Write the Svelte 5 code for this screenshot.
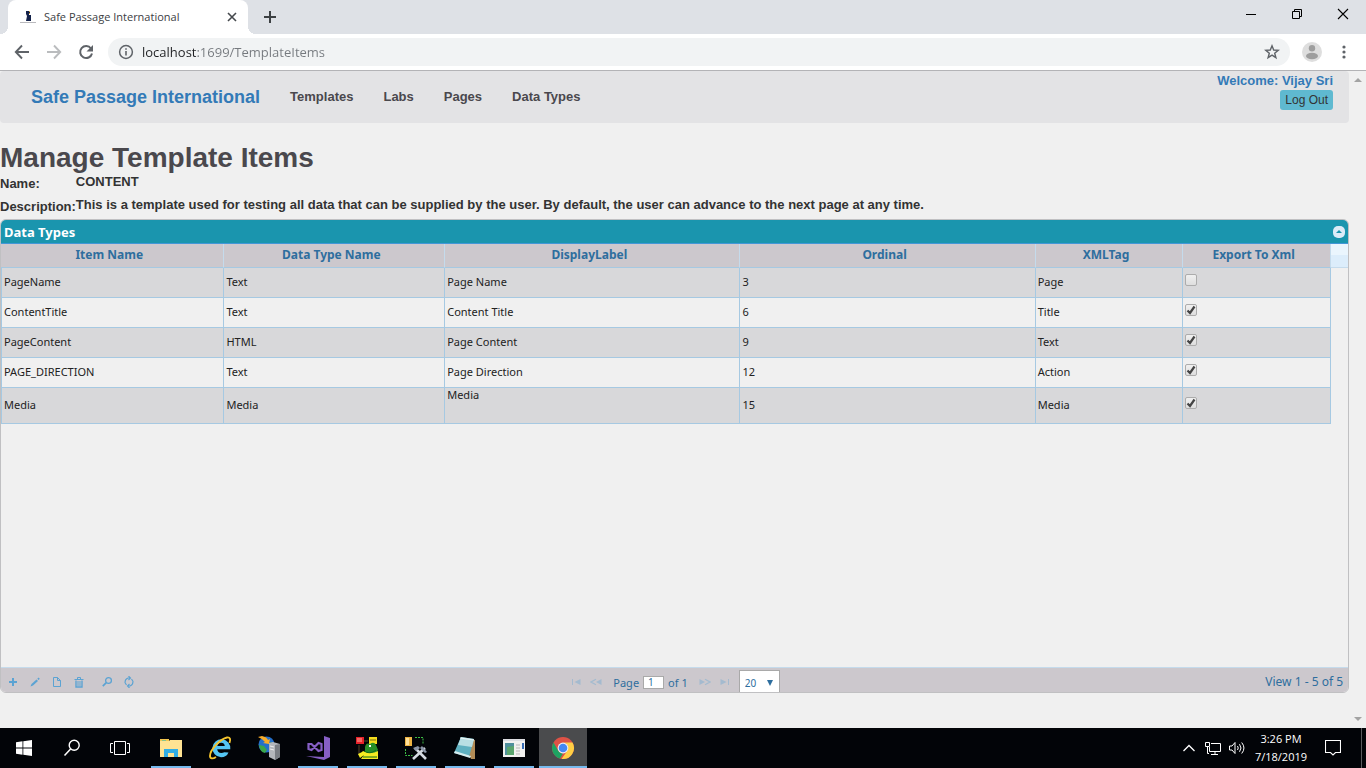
<script>
	let url = 'localhost:1699/TemplateItems';
	let page = '1';
	let pageSize = '20';
	let open = true;
	const links = ['Templates', 'Labs', 'Pages', 'Data Types'];
	const columns = [
		{label: 'Item Name', width: 16.8},
		{label: 'Data Type Name', width: 16.6},
		{label: 'DisplayLabel', width: 22.2},
		{label: 'Ordinal', width: 22.2},
		{label: 'XMLTag', width: 11.1},
		{label: 'Export To Xml', width: 11.1}
	];
	let items = [
		{name: 'PageName', type: 'Text', label: 'Page Name', ordinal: 3, tag: 'Page', xml: false},
		{name: 'ContentTitle', type: 'Text', label: 'Content Title', ordinal: 6, tag: 'Title', xml: true},
		{name: 'PageContent', type: 'HTML', label: 'Page Content', ordinal: 9, tag: 'Text', xml: true},
		{name: 'PAGE_DIRECTION', type: 'Text', label: 'Page Direction', ordinal: 12, tag: 'Action', xml: true},
		{name: 'Media', type: 'Media', label: 'Media', ordinal: 15, tag: 'Media', xml: true, tall: true}
	];
</script>

<div class="screen">
	<header class="tabs">
		<div class="tab">
			<svg width="16" height="16" viewBox="0 0 16 16">
				<path d="M6 2h4v2l-1 1v1h2v6H6l1-5-1-2z" fill="#14224a"/>
				<path d="M9 2h1v1H9zM9 4h1v1H9z" fill="#d9a441"/>
				<path d="M0 13h16v1H0z" fill="#b9b9bd"/>
			</svg>
			<span class="tab-title">Safe Passage International</span>
			<button class="plain" aria-label="Close tab">
				<svg width="16" height="16" viewBox="0 0 16 16"><path d="M4 4l8 8M12 4l-8 8" stroke="#45494d" stroke-width="1.6"/></svg>
			</button>
		</div>
		<button class="plain new-tab" aria-label="New tab">
			<svg width="16" height="16" viewBox="0 0 16 16"><path d="M8 2v12M2 8h12" stroke="#3c4043" stroke-width="2"/></svg>
		</button>
		<div class="window-buttons">
			<button class="plain" aria-label="Minimize">
				<svg width="12" height="12" viewBox="0 0 12 12"><path d="M1 6.5h10" stroke="#000"/></svg>
			</button>
			<button class="plain" aria-label="Restore">
				<svg width="12" height="12" viewBox="0 0 12 12"><path d="M1.5 3.5h7v7h-7zM3.5 3.5v-2h7v7h-2" fill="none" stroke="#000"/></svg>
			</button>
			<button class="plain" aria-label="Close window">
				<svg width="12" height="12" viewBox="0 0 12 12"><path d="M1 1l10 10M11 1L1 11" stroke="#000" stroke-width="1.1"/></svg>
			</button>
		</div>
	</header>

	<div class="toolbar">
		<button class="plain nav-button" aria-label="Back">
			<svg width="16" height="16" viewBox="0 0 16 16"><path d="M15 8H2M8 1.500L1.800 8 8 14.500" fill="none" stroke="#5f6368" stroke-width="1.900"/></svg>
		</button>
		<button class="plain nav-button" aria-label="Forward">
			<svg width="16" height="16" viewBox="0 0 16 16"><path d="M1 8h13M8 1.500L14.200 8 8 14.500" fill="none" stroke="#babcbe" stroke-width="1.900"/></svg>
		</button>
		<button class="plain nav-button" aria-label="Reload">
			<svg width="16" height="16" viewBox="0 0 16 16"><path d="M13 4.500A6 6 0 1 0 14 9.500" fill="none" stroke="#5f6368" stroke-width="2"/><path d="M15 1v6.500H8.500z" fill="#5f6368"/></svg>
		</button>
		<div class="omnibox">
			<svg width="16" height="16" viewBox="0 0 16 16"><circle cx="8" cy="8" r="6.400" fill="none" stroke="#5f6368" stroke-width="1.500"/><path d="M8 7v4.500M8 4.200v1.600" stroke="#5f6368" stroke-width="1.600"/></svg>
			<input class="url" aria-label="Address" bind:value={url}>
			<button class="plain" aria-label="Bookmark this page">
				<svg width="16" height="16" viewBox="0 0 16 16"><path d="M8 1.800l1.700 4.200 4.500.3-3.500 2.900 1.200 4.500L8 11.200l-3.900 2.500 1.200-4.500L1.800 6.300l4.500-.3z" fill="none" stroke="#5f6368" stroke-width="1.400"/></svg>
			</button>
		</div>
		<button class="plain avatar" aria-label="Profile">
			<svg width="20" height="20" viewBox="0 0 20 20"><circle cx="10" cy="10" r="10" fill="#dedede"/><circle cx="10" cy="6.200" r="3.200" fill="#9e9e9e"/><ellipse cx="10" cy="14" rx="6" ry="3.300" fill="#9e9e9e"/></svg>
		</button>
		<button class="plain" aria-label="Menu">
			<svg width="16" height="16" viewBox="0 0 16 16"><g fill="#5f6368"><circle cx="8" cy="3" r="1.600"/><circle cx="8" cy="8" r="1.600"/><circle cx="8" cy="13" r="1.600"/></g></svg>
		</button>
	</div>

	<div class="viewport">
		<main>
			<nav class="site-nav">
				<a class="brand" href="/">Safe Passage International</a>
				{#each links as link}
					<a href="#{link}">{link}</a>
				{/each}
				<div class="account">
					<span class="welcome">Welcome: Vijay Sri</span>
					<button class="logout">Log Out</button>
				</div>
			</nav>

			<h1>Manage Template Items</h1>
			<dl>
				<dt>Name:</dt>
				<dd>CONTENT</dd>
				<dt>Description:</dt>
				<dd>This is a template used for testing all data that can be supplied by the user. By default, the user can advance to the next page at any time.</dd>
			</dl>

			<section class="grid">
				<div class="grid-title">
					<h2>Data Types</h2>
					<button class="plain" aria-label="Collapse grid" on:click={() => (open = !open)}>
						<svg width="12" height="12" viewBox="0 0 12 12"><rect width="12" height="12" rx="5" fill="#dcebf7"/><path d="M6 4l3 3H3z" fill="#1a95ae"/></svg>
					</button>
				</div>
				<div class="grid-body">
					{#if open}
						<table>
							<thead>
								<tr>
									{#each columns as col}
										<th style="width: {col.width}%">{col.label}</th>
									{/each}
									<td class="gutter"></td>
								</tr>
							</thead>
							<tbody>
								{#each items as item}
									<tr class:tall={item.tall}>
										<td>{item.name}</td>
										<td>{item.type}</td>
										<td class="label">{item.label}</td>
										<td>{item.ordinal}</td>
										<td>{item.tag}</td>
										<td><input type="checkbox" aria-label="Export {item.name} to XML" bind:checked={item.xml}></td>
									</tr>
								{/each}
							</tbody>
						</table>
					{/if}
				</div>
				<div class="pager">
					<div class="actions">
						<button class="plain" aria-label="Add row">
							<svg width="10" height="12" viewBox="0 0 10 12"><path d="M5 2v8M1 6h8" stroke="#5ba3d3" stroke-width="2"/></svg>
						</button>
						<button class="plain" aria-label="Edit row">
							<svg width="10" height="12" viewBox="0 0 10 12"><path d="M.5 10.500l1-2.500L6.500 3.500l1.500 1.500L3 9.500z" fill="#5ba3d3"/><path d="M7.300 2.700l1.200-1.200 1.300 1.300-1.200 1.200z" fill="#5ba3d3"/></svg>
						</button>
						<button class="plain" aria-label="View row">
							<svg width="10" height="12" viewBox="0 0 10 12"><path d="M1.500 1.500h4l3 3v6h-7zM5.500 1.500v3h3" fill="none" stroke="#5ba3d3"/></svg>
						</button>
						<button class="plain" aria-label="Delete row">
							<svg width="10" height="12" viewBox="0 0 10 12"><path d="M.5 3.500h9M3.500 3V1.500h3V3" fill="none" stroke="#5ba3d3"/><path d="M2 4.500v6.500h6V4.500" fill="none" stroke="#5ba3d3" stroke-width="1.400"/><path d="M4 5v5M6 5v5" stroke="#5ba3d3"/></svg>
						</button>
						<button class="plain find" aria-label="Find records">
							<svg width="10" height="12" viewBox="0 0 10 12"><circle cx="6.500" cy="4.500" r="2.900" fill="none" stroke="#5ba3d3" stroke-width="1.300"/><path d="M4.300 6.700L.8 10.200" stroke="#5ba3d3" stroke-width="1.700"/></svg>
						</button>
						<button class="plain" aria-label="Reload grid">
							<svg width="10" height="12" viewBox="0 0 10 12"><path d="M5.500 2H4Q1 3 1 6.500L2.500 9M4.500 10H6Q9 9 9 5.500L7.500 3M4.500 0l2 2-2 2M5.500 8l-2 2 2 2" fill="none" stroke="#5ba3d3" stroke-width="1.100"/></svg>
						</button>
					</div>
					<div class="paging">
						<button class="plain faded" aria-label="First page">
							<svg width="10" height="8" viewBox="0 0 10 8"><path d="M1 1h1v6H1zM9.500 1v6L3.500 4z" fill="#5ba3d3"/></svg>
						</button>
						<button class="plain faded" aria-label="Previous page">
							<svg width="12" height="8" viewBox="0 0 12 8"><path d="M11.500 1v6L6 4z" fill="#5ba3d3"/><path d="M6 1.300L1 4l5 2.700" fill="none" stroke="#5ba3d3" stroke-width="1.300"/></svg>
						</button>
						<label>Page <input class="page-number" bind:value={page}> of 1</label>
						<button class="plain faded" aria-label="Next page">
							<svg width="12" height="8" viewBox="0 0 12 8"><path d="M.5 1v6L6 4z" fill="#5ba3d3"/><path d="M6 1.300L11 4 6 6.700" fill="none" stroke="#5ba3d3" stroke-width="1.300"/></svg>
						</button>
						<button class="plain faded" aria-label="Last page">
							<svg width="10" height="8" viewBox="0 0 10 8"><path d="M8 1h1v6H8zM.5 1v6L6.500 4z" fill="#5ba3d3"/></svg>
						</button>
						<select aria-label="Records per page" bind:value={pageSize}>
							<option>20</option>
							<option>50</option>
						</select>
					</div>
					<div class="records">View 1 - 5 of 5</div>
				</div>
			</section>
		</main>
		<div class="scrollbar">
			<svg width="8" height="4" viewBox="0 0 8 4"><path d="M4 0l4 4H0z" fill="#a3a3a3"/></svg>
			<svg width="8" height="4" viewBox="0 0 8 4"><path d="M4 4L0 0h8z" fill="#a3a3a3"/></svg>
		</div>
	</div>

	<footer class="taskbar">
		<button class="plain" aria-label="Start">
			<svg width="16" height="16" viewBox="0 0 16 16"><path d="M0 2.200L6.500 1.300v6.300H0zM7.300 1.200L16 0v7.600H7.300zM0 8.400h6.500v6.300L0 13.800zM7.300 8.400H16V16l-8.700-1.200z" fill="#fff"/></svg>
		</button>
		<button class="plain" aria-label="Search">
			<svg width="18" height="18" viewBox="0 0 18 18"><circle cx="11.200" cy="6.300" r="5" fill="none" stroke="#fff" stroke-width="1.400"/><path d="M7.600 10L1.500 16.500" stroke="#fff" stroke-width="1.500"/></svg>
		</button>
		<button class="plain" aria-label="Task view">
			<svg width="20" height="16" viewBox="0 0 20 16"><path d="M4.500 1.500h11v13h-11zM3 3.500H.5v9H3M17 3.500h2.500v9H17" fill="none" stroke="#fff"/></svg>
		</button>
		<div class="apps">
			<button class="plain running" aria-label="File Explorer">
				<svg width="24" height="24" viewBox="0 0 24 24"><path d="M1 3h9v3H1z" fill="#f3c64f"/><path d="M1 5h9l1-1h12v17H1z" fill="#ffe393"/><path d="M3 4h4v1H3z" fill="#8bc58b"/><path d="M5 13h14v8h-4v-4H9v4H5z" fill="#32aee5"/></svg>
			</button>
			<button class="plain" aria-label="Internet Explorer">
				<svg width="24" height="24" viewBox="0 0 24 24"><path d="M20.500 16.500a8 7.500 0 0 1-7.500 4.800 9 9 0 1 1 9.300-8H9.200q.5 3.500 4 3.700 2 0 3-.8zM9.300 10h7.500Q16.300 6.800 13.200 6.800T9.300 10z" fill="#54c5f3"/><path d="M21.500 7c1.500-4 .5-6-2.500-5.500C12.500 3 2 13.500 2 20c0 3 3 3 6 1" fill="none" stroke="#f5c42c" stroke-width="1.900"/></svg>
			</button>
			<button class="plain" aria-label="IIS Manager">
				<svg width="24" height="24" viewBox="0 0 24 24"><circle cx="9.500" cy="8.500" r="8" fill="#2470cc"/><path d="M2 9l5 1 3 4-2 3q-5-1-6-8zM12 8l2-2 2 2-1 4-3-1z" fill="#3aa64a"/><path d="M1 1l4-1q5 1 6 4l2-1-1 5-6-1 2-1q-2-3-7-5z" fill="#f9ad29"/><path d="M12 7l4-1 7 2v13l-5 3-6-3z" fill="#b4b7bc"/><path d="M18 9l5-1v13l-5 3z" fill="#7a7e84"/><path d="M13 10l4 1M13 13l4 1" stroke="#eee"/></svg>
			</button>
			<button class="plain running" aria-label="Visual Studio">
				<svg width="24" height="24" viewBox="0 0 24 24"><path d="M18 0l6 2v19l-6 3L0 20l18 1z" fill="#865fc5"/><path d="M2.500 8v5l3 1 7-7 3 1v6l-3 1-7-7z" fill="none" stroke="#865fc5" stroke-width="2.200"/></svg>
			</button>
			<button class="plain running" aria-label="Toad">
				<svg width="24" height="24" viewBox="0 0 24 24"><path d="M1 1h8v7H1z" fill="#e62129"/><path d="M2 3h5M2 5h5" stroke="#ffb0a0"/><path d="M14 1h8v7h-8z" fill="#f4dc1d"/><path d="M15 4h6" stroke="#776c11"/><path d="M4 9v10M9 5h4" stroke="#56472a"/><path d="M10 11q1-5 5-3 4-3 6 1l2 5-2 3H10z" fill="#268e27"/><path d="M8 15q8 4 15 0v8H6l3-4-4 3-2-4 4-2z" fill="#f5ec22"/><path d="M9 15q6 4 12-1M8 21h14" fill="none" stroke="#136b19"/><path d="M14 9h2v2h-2z" fill="#fff"/></svg>
			</button>
			<button class="plain running" aria-label="Database tools">
				<svg width="24" height="24" viewBox="0 0 24 24"><path d="M1 1h7v9H1z" fill="#edb343"/><path d="M2 2h3v7H2z" fill="#ffe19b"/><path d="M11 1.500h8v7M1.500 13v6.500h7" fill="none" stroke="#3cbd45" stroke-dasharray="2 1"/><path d="M11 12l11 11M21 12L9 23" stroke="#d5dae2" stroke-width="2.600"/><path d="M9 12l5-2 2 2-4 3zM18 10l5 6-2 1-5-5z" fill="#8b96a8"/></svg>
			</button>
			<button class="plain running" aria-label="Notepad">
				<svg width="24" height="24" viewBox="0 0 24 24"><path d="M9 2l13 2 0 19-4 0z" fill="#b28b56"/><path d="M8 1l13 2-5 18L1 17z" fill="#5fb0c0"/><path d="M8 1l13 2-2 8L5 9z" fill="#b9dfe4"/><path d="M7 2l14 2" stroke="#e9f5f5"/><path d="M1 17l16 5 1-2L2 15z" fill="#d6ecee"/></svg>
			</button>
			<button class="plain running" aria-label="Application window">
				<svg width="24" height="24" viewBox="0 0 24 24"><path d="M1 3h22v18H1z" fill="#f1f1ef"/><path d="M1 3h22v2H1z" fill="#dcdde2"/><path d="M3 7h9v12H3z" fill="#4f8f9c"/><path d="M5 11l7-1v9H5z" fill="#5aa46d"/><path d="M14 9h4M14 12h4M14 15h4M14 18h4" stroke="#b7b7b7"/><path d="M20 7h2v6h-2z" fill="#356bb4"/></svg>
			</button>
			<button class="plain running active" aria-label="Google Chrome">
				<svg width="24" height="24" viewBox="0 0 24 24"><circle cx="12" cy="12" r="11" fill="#de5246"/><path d="M2.500 6.500L7.200 14.700A5.500 5.500 0 0 0 12 17.500L9 22.600A11 11 0 0 1 2.500 6.500z" fill="#1da362"/><path d="M12 6.500h9.500A11 11 0 0 1 10.500 22.900L16.500 14.500A5.500 5.500 0 0 0 12 6.500z" fill="#ffce44"/><circle cx="12" cy="12" r="5.400" fill="#f1f1f1"/><circle cx="12" cy="12" r="4.300" fill="#4587f3"/></svg>
			</button>
		</div>
		<div class="tray">
			<svg width="16" height="16" viewBox="0 0 16 16"><path d="M2.500 11L8 5.500l5.500 5.500" fill="none" stroke="#fff" stroke-width="1.300"/></svg>
			<svg width="16" height="16" viewBox="0 0 16 16"><path d="M6 3.500h9.500v8H4.500V7M.5 2.500h4v4h-4zM2.500 6.500v7H4M10 12v2M6 14.500h7" fill="none" stroke="#fff"/></svg>
			<svg width="16" height="16" viewBox="0 0 16 16"><path d="M.5 6H3l3-3.500v11L3 10H.5zM8.500 6q1.500 2 0 4M10.500 4.200q3 3.800 0 7.600M12.700 2.500q4.500 5.500 0 11" fill="none" stroke="#fff"/></svg>
			<div class="clock">
				<time>3:26 PM</time>
				<time>7/18/2019</time>
			</div>
			<button class="plain notifications" aria-label="Notifications">
				<svg width="16" height="16" viewBox="0 0 16 16"><path d="M.5 .5h15v12h-5L8 15l-2.500-2.500h-5z" fill="none" stroke="#fff" stroke-width="1.100"/></svg>
			</button>
			<button class="plain show-desktop" aria-label="Show desktop"></button>
		</div>
	</footer>
</div>

<style>
	:global(body) {
		background: #f0f0f0;
	}
	.screen {
		display: flex;
		flex-direction: column;
		min-height: 100vh;
		font-family: "Liberation Sans", Arial, sans-serif;
		font-size: 13px;
	}
	.plain {
		display: flex;
		align-items: center;
		justify-content: center;
		padding: 0;
		border: 0;
		background: none;
	}
	svg {
		display: block;
		flex: none;
	}

	/* Browser */
	.tabs {
		display: flex;
		height: 34px;
		padding-left: 8px;
		background: #dee1e6;
	}
	.tab {
		position: relative;
		display: flex;
		align-items: center;
		gap: 8px;
		box-sizing: border-box;
		width: 240px;
		padding: 0 8px 0 12px;
		border-radius: 8px 8px 0 0;
		background: #fff;
	}
	.tab::before, .tab::after {
		content: "";
		position: absolute;
		bottom: 0;
		width: 8px;
		height: 8px;
	}
	.tab::before {
		right: 100%;
		background: radial-gradient(circle at 0 0, #dee1e6 8px, #fff 8px);
	}
	.tab::after {
		left: 100%;
		background: radial-gradient(circle at 100% 0, #dee1e6 8px, #fff 8px);
	}
	.tab-title {
		flex: 1;
		padding-bottom: 2px;
		color: #3c4043;
		font: 11px "Open Sans", sans-serif;
	}
	.new-tab {
		width: 44px;
	}
	.window-buttons {
		display: flex;
		height: 28px;
		margin-left: auto;
	}
	.window-buttons .plain {
		width: 46px;
	}
	.toolbar {
		display: flex;
		align-items: center;
		height: 36px;
		padding: 0 14px 0 6px;
		border-bottom: 1px solid #b3b3b6;
		background: #fff;
	}
	.nav-button {
		width: 32px;
	}
	.omnibox {
		flex: 1;
		display: flex;
		align-items: center;
		gap: 8px;
		height: 28px;
		margin-left: 6px;
		padding: 0 10px;
		border-radius: 14px;
		background: #f1f3f4;
	}
	.url {
		flex: 1;
		min-width: 0;
		padding: 0;
		border: 0;
		outline: 0;
		/* host in black, the rest of the address greyed */
		background: linear-gradient(90deg, #202124 55px, #75797e 55px);
		-webkit-background-clip: text;
		background-clip: text;
		-webkit-text-fill-color: transparent;
		font: 13px "Open Sans", sans-serif;
	}
	.avatar {
		margin: 0 14px 0 12px;
	}

	/* Page */
	.viewport {
		flex: 1;
		display: flex;
		background: #f0f0f0;
	}
	main {
		flex: 1;
		display: flex;
		flex-direction: column;
		min-width: 0;
		padding-bottom: 35px;
	}
	.scrollbar {
		display: flex;
		flex-direction: column;
		align-items: center;
		justify-content: space-between;
		box-sizing: border-box;
		width: 17px;
		padding: 7px 0;
	}
	.site-nav {
		display: flex;
		align-items: center;
		gap: 30px;
		height: 52px;
		padding: 0 16px 0 31px;
		border-radius: 4px;
		background: #e3e3e5;
	}
	.site-nav a {
		padding-bottom: 1px;
		color: #4a484d;
		font-weight: bold;
		text-decoration: none;
	}
	.site-nav .brand {
		padding: 0;
		color: #337ab7;
		font-size: 18px;
	}
	.account {
		display: flex;
		flex-direction: column;
		align-items: flex-end;
		align-self: flex-start;
		padding-top: 1px;
		margin-left: auto;
	}
	.welcome {
		color: #337ab7;
		font-weight: bold;
		line-height: 18px;
	}
	.logout {
		height: 20px;
		padding: 0 5px;
		border: 0;
		border-radius: 3px;
		background: #5fb9d0;
		color: #333;
		font: 12px "Liberation Sans", Arial, sans-serif;
	}
	h1 {
		margin: 19px 0 0;
		color: #4a484d;
		font-size: 28px;
		line-height: 32px;
	}
	dl {
		display: grid;
		grid-template-columns: auto 1fr;
		row-gap: 6px;
		margin: 0;
		padding-bottom: 5px;
		color: #333;
		font-weight: bold;
		line-height: 15px;
	}
	dt {
		padding-top: 2px;
	}
	dd {
		margin: 0;
	}

	/* Grid */
	.grid {
		flex: 1;
		display: flex;
		flex-direction: column;
		overflow: hidden;
		border: 1px solid #c0c0c2;
		border-radius: 6px;
		font-family: "Noto Sans", "Lucida Grande", sans-serif;
		font-size: 11px;
	}
	.grid-title {
		display: flex;
		align-items: center;
		justify-content: space-between;
		height: 23px;
		padding: 0 3px;
		border-bottom: 1px solid #4297d7;
		background: #1a95ae;
	}
	h2 {
		margin: 0;
		color: #fff;
		font: bold 13px "Noto Sans", sans-serif;
	}
	.grid-body {
		flex: 1;
	}
	table {
		width: 100%;
		border-spacing: 0;
		table-layout: fixed;
	}
	th {
		box-sizing: border-box;
		height: 24px;
		padding: 0 6px 2px 0;
		border-right: 1px solid #c5dbec;
		border-bottom: 1px solid #a6c9e2;
		background: #ccc8cd;
		color: #2e6e9e;
		font-size: 12px;
		line-height: 16px;
	}
	.gutter {
		box-sizing: border-box;
		width: 17px;
		border-bottom: 1px solid #c5dbec;
		background: linear-gradient(#eaf5fd 50%, #dcedfb 50%);
	}
	tbody td {
		box-sizing: border-box;
		height: 30px;
		padding: 0 2px 2px;
		border-right: 1px solid #a6c9e2;
		border-bottom: 1px solid #a6c9e2;
		color: #222;
		line-height: 14px;
	}
	tbody td:first-child {
		border-left: 1px solid #a6c9e2;
	}
	tbody tr:nth-child(odd) {
		background: #d8d8da;
	}
	.tall td {
		height: 36px;
	}
	.tall .label {
		vertical-align: top;
	}
	input[type="checkbox"] {
		appearance: none;
		display: block;
		width: 12px;
		height: 12px;
		margin: 0 0 4px;
		border: 1px solid #acacac;
		border-radius: 2px;
		background: linear-gradient(#f0f0f0, #dedede);
	}
	input[type="checkbox"]:checked {
		background: url("data:image/svg+xml,%3Csvg xmlns='http://www.w3.org/2000/svg' viewBox='0 0 10 10'%3E%3Cpath d='M1.500 5.500L4 8l4.500-6.500' fill='none' stroke='%23444' stroke-width='2.200'/%3E%3C/svg%3E"), linear-gradient(#f0f0f0, #dedede);
	}
	.pager {
		display: grid;
		grid-template-columns: 1fr auto 1fr;
		align-items: center;
		height: 24px;
		padding: 0 5px 0 7px;
		border-top: 1px solid #c5dbec;
		background: #ccc8cd;
		color: #2e6e9e;
	}
	.actions {
		display: flex;
		gap: 12px;
		padding-top: 3px;
	}
	.find {
		margin-left: 6px;
	}
	.paging {
		display: flex;
		align-items: center;
		align-self: end;
		gap: 9px;
	}
	.faded {
		padding-top: 2px;
		opacity: .35;
	}
	label {
		display: flex;
		align-items: center;
		gap: 4px;
		padding: 2px 2px 0;
	}
	.page-number {
		box-sizing: border-box;
		width: 21px;
		height: 13px;
		padding: 0 4px;
		border: 1px solid #a9a9a9;
		background: #fff;
		color: #2e6e9e;
		font: 10px "Noto Sans", sans-serif;
	}
	select {
		appearance: none;
		box-sizing: border-box;
		width: 41px;
		height: 22px;
		padding: 2px 0 0 5px;
		border: 1px solid #a9a9a9;
		border-bottom: 0;
		border-radius: 0;
		background: #fff url("data:image/svg+xml,%3Csvg xmlns='http://www.w3.org/2000/svg' width='6' height='6'%3E%3Cpath d='M0 0h6L3 6z' fill='%232e6e9e'/%3E%3C/svg%3E") no-repeat right 6px top 9px;
		color: #2e6e9e;
		font: 10px "Noto Sans", sans-serif;
	}
	.records {
		padding-top: 3px;
		font-size: 12px;
		text-align: right;
	}

	/* Taskbar */
	.taskbar {
		display: flex;
		height: 40px;
		background: #020408;
	}
	.taskbar > .plain, .apps .plain {
		width: 48px;
	}
	.apps {
		display: flex;
		gap: 1px;
		margin-left: 3px;
	}
	.running {
		background: linear-gradient(#76b9ed, #76b9ed) no-repeat center bottom / 40px 2px;
	}
	.active {
		background-color: #4a4b4d;
		background-size: 48px 2px;
	}
	.tray {
		display: flex;
		align-items: center;
		gap: 8px;
		margin-left: auto;
	}
	.clock {
		display: flex;
		flex-direction: column;
		align-items: center;
		width: 56px;
		color: #fff;
		font: 11px/18px "Open Sans", sans-serif;
	}
	.notifications {
		width: 32px;
	}
	.show-desktop {
		align-self: stretch;
		width: 5px;
		margin-left: 4px;
		border-left: 1px solid #5a5b5e;
	}
</style>
